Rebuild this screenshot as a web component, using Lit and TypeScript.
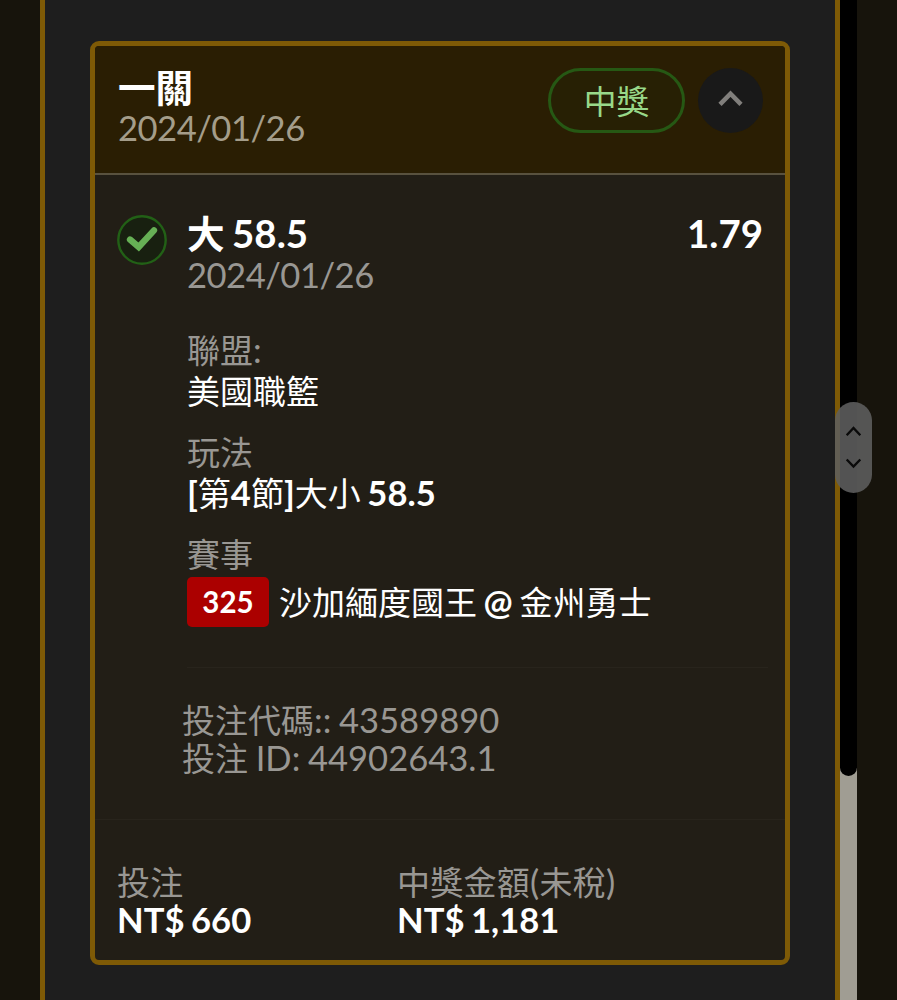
import { LitElement, html, css } from "lit";
import { customElement, property } from "lit/decorators.js";

/** Wraps runs of Han characters so they can carry their own size and weight. */
const mixed = (text: string) =>
  text
    .split(/([\u3400-\u9fff]+)/)
    .filter((part) => part !== "")
    .map((part) =>
      /[\u3400-\u9fff]/.test(part) ? html`<span class="han">${part}</span>` : part
    );

@customElement("bet-card")
class BetCard extends LitElement {
  @property({ attribute: false }) bet: any;

  static styles = css`
    :host {
      display: flex;
      flex-direction: column;
      box-sizing: border-box;
      height: 924px;
      border: 5px solid #7e5a06;
      border-radius: 9px;
      background: #221e16;
      color: #fff;
      overflow: hidden;
    }
    .line {
      font-size: 34.6px;
      line-height: 38px;
      white-space: pre;
      word-spacing: -1.8px;
    }
    .han {
      font-size: 33px;
      font-weight: 400;
      line-height: 0;
    }
    .muted {
      color: #999793;
      word-spacing: -1.2px;
    }
    .date {
      letter-spacing: -0.5px;
    }
    .strong {
      font-weight: 700;
    }
    .head {
      display: flex;
      box-sizing: border-box;
      height: 129px;
      padding: 22px 22px 0 23px;
      background: #2a1e03;
      border-bottom: 2px solid #59523f;
    }
    .titles {
      flex: 1;
      padding-top: 0.5px;
    }
    .title,
    .pick {
      font-size: 38.4px;
      font-weight: 700;
      line-height: 40px;
    }
    .title .han,
    .pick .han {
      font-size: 37.6px;
      font-weight: 700;
    }
    .title {
      line-height: 36px;
      margin-bottom: 4.5px;
    }
    .head .muted {
      color: #a49d8a;
    }
    .pill {
      box-sizing: border-box;
      width: 137px;
      height: 65px;
      border: 3px solid #265814;
      border-radius: 33px;
      background: #272004;
      color: #98d889;
      display: flex;
      align-items: center;
      justify-content: center;
      font-size: 32.8px;
      padding-bottom: 2px;
      margin-right: 13px;
    }
    .toggle {
      width: 65px;
      height: 65px;
      border-radius: 50%;
      background: #191919;
    }
    .body {
      display: grid;
      grid-template-columns: 70px 1fr;
      padding: 38px 17px 0 22px;
      box-sizing: border-box;
      height: 492px;
    }
    .check {
      display: block;
      margin-top: 2px;
    }
    .row {
      display: flex;
      justify-content: space-between;
      padding-right: 5px;
      margin-bottom: 3px;
    }
    .field {
      display: flex;
      flex-direction: column;
      gap: 3px;
    }
    .fields {
      display: flex;
      flex-direction: column;
      gap: 23px;
      margin-top: 37px;
    }
    .match {
      display: flex;
      align-items: center;
      gap: 10px;
      height: 50px;
      margin-top: 1px;
    }
    .tag {
      width: 82px;
      height: 50px;
      border-radius: 5px;
      background: #ab0000;
      text-align: center;
      font-size: 29.5px;
      line-height: 50px;
      font-weight: 700;
    }
    .codes {
      margin: 0 17px 0 92px;
      border-top: 1px solid #28241c;
      height: 152px;
      box-sizing: border-box;
      padding-top: 33px;
    }
    .codes .line {
      margin-left: -5px;
    }
    .foot {
      display: grid;
      grid-template-columns: 280px 1fr;
      border-top: 1px solid #28241c;
      padding: 43px 0 0 22px;
    }
    .foot .muted {
      letter-spacing: 0.25px;
    }
  `;

  render() {
    const b = this.bet;
    return html`
      <div class="head">
        <div class="titles">
          <div class="line title">${mixed(b.title)}</div>
          <div class="line muted date">${b.date}</div>
        </div>
        <div class="pill">${b.status}</div>
        <svg class="toggle" viewBox="0 0 65 65">
          <path d="M22 36.3 L32.5 25.6 L43 36.3" fill="none" stroke="#817f7c" stroke-width="4.5" />
        </svg>
      </div>
      <div class="body">
        <svg class="check" width="50" height="50" viewBox="0 0 50 50">
          <circle cx="25" cy="25" r="23.7" fill="#182010" stroke="#226016" stroke-width="2.4" />
          <path d="M13 24.5 L21.7 32 L37 15.4" fill="none" stroke="#66b055" stroke-width="6.3" stroke-linecap="round" />
        </svg>
        <div>
          <div class="row">
            <div class="line pick">${mixed(b.pick)}</div>
            <div class="line pick">${b.odds}</div>
          </div>
          <div class="line muted date">${b.date}</div>
          <div class="fields">
            ${b.fields.map(
              (f: any) => html`<div class="field">
                <div class="line muted">${mixed(f.label)}</div>
                ${f.tag
                  ? html`<div class="match">
                      <span class="tag">${f.tag}</span>
                      <div class="line strong">${mixed(f.value)}</div>
                    </div>`
                  : html`<div class="line strong">${mixed(f.value)}</div>`}
              </div>`
            )}
          </div>
        </div>
      </div>
      <div class="codes">
        ${b.codes.map((c: string) => html`<div class="line muted">${mixed(c)}</div>`)}
      </div>
      <div class="foot">
        ${b.totals.map(
          (t: any) => html`<div>
            <div class="line muted">${mixed(t.label)}</div>
            <div class="line strong">${t.value}</div>
          </div>`
        )}
      </div>
    `;
  }
}

@customElement("app-root")
class AppRoot extends LitElement {
  static styles = css`
    :host {
      display: grid;
      grid-template-columns: 40px 800px 17px 1fr;
      position: relative;
      width: 897px;
      height: 1000px;
      overflow: hidden;
      background: #17140c;
      font-family: "Lato", "Noto Sans CJK TC", sans-serif;
    }
    .panel {
      grid-column: 2;
      box-sizing: border-box;
      border: solid #7e5a06;
      border-width: 0 5px;
      background: #1e1e1e;
      padding: 41px 45px 0;
    }
    .track {
      background: #a09d93;
    }
    .thumb {
      height: 776px;
      background: #000;
      border-radius: 0 0 9px 9px;
    }
    .handle {
      position: absolute;
      left: 835px;
      top: 402px;
      width: 37px;
      height: 91px;
      border-radius: 18.5px;
      background: rgba(94, 94, 94, 0.88);
    }
  `;

  private bet = {
    title: "一關",
    date: "2024/01/26",
    status: "中獎",
    pick: "大 58.5",
    odds: "1.79",
    fields: [
      { label: "聯盟:", value: "美國職籃" },
      { label: "玩法", value: "[第4節]大小 58.5" },
      { label: "賽事", value: "沙加緬度國王 @ 金州勇士", tag: "325" },
    ],
    codes: ["投注代碼:: 43589890", "投注 ID: 44902643.1"],
    totals: [
      { label: "投注", value: "NT$ 660" },
      { label: "中獎金額(未稅)", value: "NT$ 1,181" },
    ],
  };

  render() {
    return html`
      <div class="panel"><bet-card .bet=${this.bet}></bet-card></div>
      <div class="track"><div class="thumb"></div></div>
      <svg class="handle" viewBox="0 0 37 91">
        <path d="M11.7 33.3 L18.5 26 L25.3 33.3 M11.7 57.5 L18.5 64.5 L25.3 57.5" fill="none" stroke="#0a0a0a" stroke-width="2.4" />
      </svg>
    `;
  }
}
